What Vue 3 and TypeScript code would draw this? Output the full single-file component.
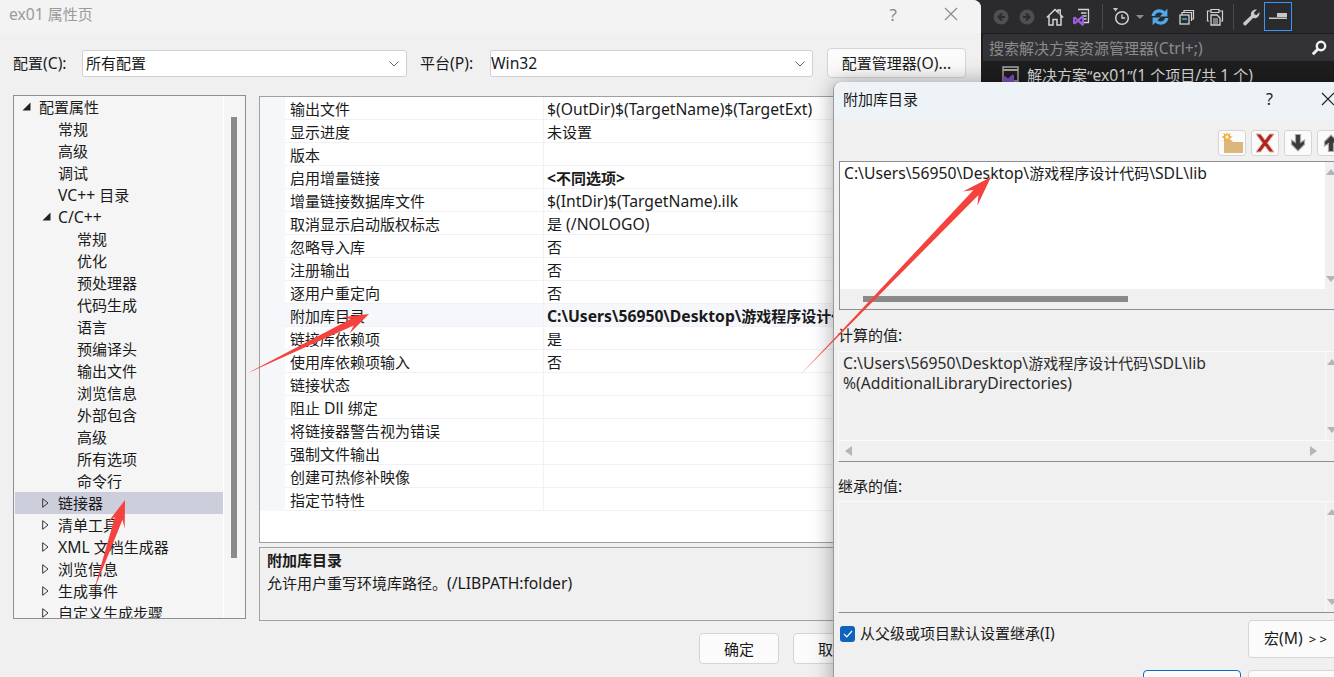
<template>
  <div class="desktop">
    <!-- dark VS panel behind the dialogs -->
    <div class="vs-panel">
      <div class="vs-toolbar">
        <svg class="tb-icon" viewBox="0 0 16 16" width="16" height="16"><circle cx="8" cy="8" r="7.500" fill="#4f4f51" /><path d="M9 4.500 5.500 8 9 11.500M5.500 8H12" stroke="#2b2b2d" stroke-width="2" fill="none" /></svg>
        <svg class="tb-icon" viewBox="0 0 16 16" width="16" height="16"><circle cx="8" cy="8" r="7.500" fill="#4f4f51" /><path d="M7 4.500 10.500 8 7 11.500M10.500 8H4" stroke="#2b2b2d" stroke-width="2" fill="none" /></svg>
        <svg class="tb-icon home" viewBox="0 0 18 18" width="18" height="18"><path d="M.8 9.500 9 1.500l3 2.900V2h2.200v4.600L17.200 9.500M3 8v9h4v-5.500h4V17h4V8" stroke="#d4d4d4" stroke-width="1.500" fill="none" /></svg>
        <svg class="tb-icon vs" viewBox="0 0 18 18" width="18" height="18"><path d="M6 1.500h10.500v13H10" stroke="#d4d4d4" stroke-width="1.300" fill="none" /><path d="M9 5h5.500M10 8h4.500M11 11h3.500" stroke="#d4d4d4" stroke-width="1.300" /><path d="M1 9.500l2-1 3 2.400L10.500 7l1.500 1v9l-1.500 1L6 14l-3 2.400-2-1zM3 11v2.500l1.700-1.200zM10 10.500 7.500 12.300 10 14.100z" fill="#9b5fe0" fill-rule="evenodd" /></svg>
        <span class="tb-sep"></span>
        <svg class="tb-icon clock" viewBox="0 0 18 18" width="18" height="18"><path d="M0 0h5L2.500 3.500z" fill="#c8c8c8" /><circle cx="9" cy="10" r="6.300" stroke="#d4d4d4" stroke-width="1.500" fill="none" /><path d="M9 6.500V10h3.200" stroke="#d4d4d4" stroke-width="1.300" fill="none" /></svg>
        <span class="tb-drop"></span>
        <svg class="tb-icon sync" viewBox="0 0 18 18" width="18" height="18"><path d="M.6 8C1.100 3.800 4.400 1.300 8.200 1.300c2.300 0 4 .8 5.400 2.100L16.400.8v7.600H8.800l2.700-2.600c-.8-.8-2-1.400-3.300-1.400C6.100 4.400 4.300 5.800 4 8zM17.400 10c-.5 4.200-3.800 6.700-7.600 6.700-2.300 0-4-.8-5.400-2.100l-2.800 2.600V9.600h7.600l-2.700 2.600c.8.800 2 1.400 3.300 1.400 2.100 0 3.900-1.400 4.200-3.600z" fill="#4fa9ea" /></svg>
        <svg class="tb-icon copy" viewBox="0 0 16 16" width="16" height="16"><path d="M5 4V1.500h9.500V10H12" stroke="#d4d4d4" stroke-width="1.200" fill="none" /><path d="M3 6V3.500h9.500V12" stroke="#d4d4d4" stroke-width="1.200" fill="none" /><rect x="1" y="6" width="9" height="9" stroke="#d4d4d4" stroke-width="1.300" fill="#2b2b2d" /><path d="M3 10h5" stroke="#4fa9ea" stroke-width="1.500" /></svg>
        <svg class="tb-icon clip" viewBox="0 0 18 18" width="18" height="18"><path d="M3 13H1.500V3h3M13.500 3h3v10H15" stroke="#d4d4d4" stroke-width="1.200" fill="none" /><path d="M5 1.500h8v3H5z" stroke="#d4d4d4" stroke-width="1.200" fill="none" /><path d="M5 7h6l3 3v7H5z" stroke="#d4d4d4" stroke-width="1.300" fill="#2b2b2d" /><path d="M7 11h5M7 13h5M7 15h5" stroke="#d4d4d4" /></svg>
        <span class="tb-sep second"></span>
        <svg class="tb-icon wrench" viewBox="0 0 18 18" width="18" height="18"><path d="M1.500 14.500 9 7.500C8.300 4.500 10.500 1 15 1.500l-3 3 .5 2 2 .6 3-3c.3 4.500-3.200 6.800-6.400 6L4 17.200c-1.800 1-3.600-1-2.500-2.700z" fill="#c8c8c8" /></svg>
        <div class="pin-box">
          <svg viewBox="0 0 18 7" width="18" height="7"><path d="M8 0h10v4H8z" fill="#c8c8c8" /><path d="M0 4.500h18V6H0z" fill="#c8c8c8" /></svg>
        </div>
      </div>
      <div class="vs-search">
        <span><Txt t="搜索解决方案资源管理器(Ctrl+;)" /></span>
        <svg viewBox="0 0 16 16" width="16" height="16"><circle cx="10" cy="6" r="4.200" stroke="#f0f0f0" stroke-width="2.400" fill="none" /><path d="M7 9 1.800 14.200" stroke="#f0f0f0" stroke-width="3" /></svg>
      </div>
      <div class="vs-tree">
        <svg viewBox="0 0 17 18" width="17" height="18"><path d="M1 1h15v14H1z" stroke="#a8a8a8" stroke-width="1.400" fill="#1e1e1e" /><path d="M1 4h15" stroke="#a8a8a8" stroke-width="2" /><path d="M1 11l2-1 3 2.400 4.500-4 1.500 1v9H1z" fill="#7d4fc0" /></svg>
        <span><Txt t="解决方案“ex01”(1 个项目/共 1 个)" /></span>
      </div>
    </div>

    <!-- property pages dialog -->
    <div class="dialog main">
      <div class="titlebar">
        <span class="title"><Txt t="ex01 属性页" /></span>
        <span class="help">?</span>
        <svg class="close" viewBox="0 0 14 14" width="14" height="14"><path d="M1 1l12 12M13 1 1 13" stroke="#8a8a8a" stroke-width="1.100" /></svg>
      </div>
      <div class="config-row">
        <label class="cfg-label"><Txt t="配置(C):" /></label>
        <div class="combo first">
          <span>所有配置</span>
          <svg viewBox="0 0 10 6" width="10" height="6"><path d="M.5.5 5 5 9.500.5" stroke="#666" fill="none" /></svg>
        </div>
        <label class="cfg-label plat"><Txt t="平台(P):" /></label>
        <div class="combo second">
          <span><Txt t="Win32" /></span>
          <svg viewBox="0 0 10 6" width="10" height="6"><path d="M.5.5 5 5 9.500.5" stroke="#666" fill="none" /></svg>
        </div>
        <button class="btn mgr"><Txt t="配置管理器(O)..." /></button>
      </div>
      <div class="content">
        <div class="tree">
          <div class="tree-rows">
            <div
              v-for="node in treeNodes"
              :key="node.id"
              :class="['tree-row', 'lv' + node.level, { selected: node.selected }]"
            >
              <svg v-if="node.arrow === 'open'" class="twisty" viewBox="0 0 9 9" width="9" height="9"><path d="M8.500.5v8h-8z" fill="#222" /></svg>
              <svg v-else-if="node.arrow === 'closed'" class="twisty" viewBox="0 0 7 10" width="7" height="10"><path d="M.700.700 6 5 .700 9.300z" fill="none" stroke="#333" /></svg>
              <span class="node-text"><Txt :t="node.text" /></span>
            </div>
          </div>
          <div class="tree-scroll"><div class="tree-thumb"></div></div>
        </div>
        <div class="right-col">
          <div class="grid">
            <div v-for="row in gridRows" :key="row.name" :class="['grid-row', { current: row.current }]">
              <div class="margin"></div>
              <div class="cell-name"><Txt :t="row.name" /></div>
              <div :class="['cell-value', { bold: row.bold }]"><Txt :t="row.value" /></div>
            </div>
          </div>
          <div class="desc">
            <div class="desc-title">附加库目录</div>
            <div><Txt t="允许用户重写环境库路径。(/LIBPATH:folder)" /></div>
          </div>
        </div>
      </div>
      <div class="footer">
        <button class="btn foot">确定</button>
        <button class="btn foot">取消</button>
      </div>
    </div>

    <!-- additional library directories dialog -->
    <div class="dialog child">
      <div class="titlebar child-title">
        <span class="child-name">附加库目录</span>
        <span class="child-help">?</span>
        <svg class="child-close" viewBox="0 0 14 14" width="14" height="14"><path d="M1 1l12 12M13 1 1 13" stroke="#222" stroke-width="1.200" /></svg>
      </div>
      <div class="child-tools">
        <button class="tool">
          <svg viewBox="0 0 24 22" width="24" height="22"><path d="M4 8h7l2 2h10v11H4z" fill="#dcb67a" /><path d="M7 0l1 2.400L10.500 1l-.7 2.700L12.500 5l-2.700 1.300.7 2.700L8 7.600 7 10 6 7.600 3.500 9l.7-2.700L1.500 5l2.700-1.300L3.500 1 6 2.400z" fill="#f0a93c" /><circle cx="7" cy="5" r="1.700" fill="#fff3cf" /></svg>
        </button>
        <button class="tool">
          <svg viewBox="0 0 22 22" width="22" height="22"><path d="M2 2h4.500L11 8 15.500 2H20l-6.500 9 6.500 9h-4.500L11 14l-4.500 6H2l6.500-9z" fill="#b3261a" stroke="#d9b5ae" stroke-width="1" /></svg>
        </button>
        <button class="tool">
          <svg viewBox="0 0 18 20" width="18" height="20"><path d="M6.500 1.500h5v8L15.500 7v4.500L9 18 2.500 11.500V7l4 2.500z" fill="#3a3a3a" stroke="#aaa" stroke-width="1.200" /></svg>
        </button>
        <button class="tool">
          <svg viewBox="0 0 18 20" width="18" height="20"><path d="M6.500 18.500h5v-8l4 2.500V8.500L9 2 2.500 8.500V13l4-2.500z" fill="#3a3a3a" stroke="#aaa" stroke-width="1.200" /></svg>
        </button>
      </div>
      <div class="edit-box">
        <div class="edit-main">
          <div class="edit-text"><Txt :t="libPath" /></div>
          <div class="vscroll">
            <i class="tri up"></i>
            <i class="tri down"></i>
          </div>
        </div>
        <div class="hscroll-dark"><div class="h-thumb"></div></div>
      </div>
      <div class="field-label computed">计算的值<Txt t=":" /></div>
      <div class="readonly computed-box">
        <div class="ro-main">
          <div class="ro-text">
            <div><Txt :t="libPath" /></div>
            <div><Txt t="%(AdditionalLibraryDirectories)" /></div>
          </div>
          <div class="vscroll">
            <i class="tri up"></i>
            <i class="tri down"></i>
          </div>
        </div>
        <div class="hscroll-light">
          <i class="tri left"></i>
          <i class="tri right"></i>
        </div>
      </div>
      <div class="field-label inherited">继承的值<Txt t=":" /></div>
      <div class="readonly inherited-box">
        <div class="ro-main">
          <div class="ro-text"></div>
          <div class="vscroll">
            <i class="tri up"></i>
            <i class="tri down"></i>
          </div>
        </div>
      </div>
      <div class="child-bottom">
        <div class="check-wrap">
          <span class="check">
            <svg viewBox="0 0 10 8" width="10" height="8"><path d="M1 4l2.800 2.800L9 1" stroke="#fff" stroke-width="1.200" fill="none" /></svg>
          </span>
          <span class="check-text"><Txt t="从父级或项目默认设置继承(I)" /></span>
        </div>
        <button class="btn macro"><Txt t="宏(M)" /><span class="gt">&gt; &gt;</span></button>
      </div>
      <div class="child-actions">
        <button class="btn action primary"></button>
        <button class="btn action"></button>
      </div>
    </div>

    <!-- red annotation arrows drawn on top of the screenshot -->
    <svg class="arrows" viewBox="0 0 1334 677" width="1334" height="677">
      <polygon v-for="a in arrows" :key="a.id" :points="a.points" fill="#f4433f" />
    </svg>
  </div>
</template>

<script setup lang="ts">
import { h } from 'vue'

interface TreeNode {
  id: number
  text: string
  level: number
  arrow?: 'open' | 'closed'
  selected?: boolean
}

interface GridRow {
  name: string
  value: string
  bold?: boolean
  current?: boolean
}

// latin runs are set a little larger than the CJK ones, the installed latin face is narrower than the original
const Txt = (props: { t: string }) =>
  (props.t.match(/[\x00-\x7f]+|[^\x00-\x7f]+/g) || []).map((run) =>
    /^[\x00-\x7f]/.test(run) ? h('span', { class: 'lat' }, run) : run,
  )
Txt.props = ['t']

const libPath = 'C:\\Users\\56950\\Desktop\\游戏程序设计代码\\SDL\\lib'

const treeSource: [string, number, ('open' | 'closed')?][] = [
  ['配置属性', 0, 'open'],
  ['常规', 1],
  ['高级', 1],
  ['调试', 1],
  ['VC++ 目录', 1],
  ['C/C++', 1, 'open'],
  ['常规', 2],
  ['优化', 2],
  ['预处理器', 2],
  ['代码生成', 2],
  ['语言', 2],
  ['预编译头', 2],
  ['输出文件', 2],
  ['浏览信息', 2],
  ['外部包含', 2],
  ['高级', 2],
  ['所有选项', 2],
  ['命令行', 2],
  ['链接器', 1, 'closed'],
  ['清单工具', 1, 'closed'],
  ['XML 文档生成器', 1, 'closed'],
  ['浏览信息', 1, 'closed'],
  ['生成事件', 1, 'closed'],
  ['自定义生成步骤', 1, 'closed'],
]

const treeNodes: TreeNode[] = treeSource.map(([text, level, arrow], id) => ({
  id,
  text,
  level,
  arrow,
  selected: text === '链接器',
}))

const gridRows: GridRow[] = [
  { name: '输出文件', value: '$(OutDir)$(TargetName)$(TargetExt)' },
  { name: '显示进度', value: '未设置' },
  { name: '版本', value: '' },
  { name: '启用增量链接', value: '<不同选项>', bold: true },
  { name: '增量链接数据库文件', value: '$(IntDir)$(TargetName).ilk' },
  { name: '取消显示启动版权标志', value: '是 (/NOLOGO)' },
  { name: '忽略导入库', value: '否' },
  { name: '注册输出', value: '否' },
  { name: '逐用户重定向', value: '否' },
  { name: '附加库目录', value: libPath, bold: true, current: true },
  { name: '链接库依赖项', value: '是' },
  { name: '使用库依赖项输入', value: '否' },
  { name: '链接状态', value: '' },
  { name: '阻止 Dll 绑定', value: '' },
  { name: '将链接器警告视为错误', value: '' },
  { name: '强制文件输出', value: '' },
  { name: '创建可热修补映像', value: '' },
  { name: '指定节特性', value: '' },
]

// builds the tapered annotation arrow as a polygon
const arrowPoints = (x1: number, y1: number, x2: number, y2: number, head: number, wing: number, neck: number) => {
  const len = Math.hypot(x2 - x1, y2 - y1)
  const dx = (x2 - x1) / len
  const dy = (y2 - y1) / len
  const nx = -dy
  const ny = dx
  const at = (back: number, side: number) =>
    `${(x2 - dx * back + nx * side).toFixed(1)},${(y2 - dy * back + ny * side).toFixed(1)}`
  return [`${x1},${y1}`, at(head * 0.72, neck), at(head, wing), `${x2},${y2}`, at(head, -wing), at(head * 0.72, -neck)].join(' ')
}

const arrows = [
  { id: 1, points: arrowPoints(248, 373, 369, 314, 26, 9, 3.5) },
  { id: 2, points: arrowPoints(800, 375, 991, 177, 30, 10, 3.5) },
  { id: 3, points: arrowPoints(94, 590, 125, 500, 27, 9, 4) },
]
</script>

<style>
.lat {
  font-size: 15.7px;
}
</style>

<style scoped>
.desktop {
  position: relative;
  width: 1334px;
  height: 677px;
  overflow: hidden;
  background: #1e1e1e;
  font-family: "Noto Sans", "Noto Sans CJK SC", sans-serif;
  font-size: 15px;
  color: #1a1a1a;
}

button {
  font: inherit;
  color: inherit;
}

.vs-panel {
  position: absolute;
  left: 977px;
  top: 0;
  width: 357px;
  height: 100%;
  background: #1e1e1e;
  color: #dcdcdc;
}

.vs-toolbar {
  height: 33px;
  background: #2b2b2d;
  display: flex;
  align-items: center;
  padding-left: 16px;
}

.tb-icon {
  flex: none;
  margin-right: 10px;
}

.home {
  margin-left: 1px;
  margin-right: 8px;
}

.vs {
  margin-right: 12px;
}

.tb-sep {
  width: 1px;
  height: 26px;
  background: #4a4a4c;
  margin: 0 10px 0 0;
}

.tb-sep.second {
  margin: 0 8px 0 -1px;
}

.clock {
  margin-right: 5px;
}

.tb-drop {
  width: 0;
  height: 0;
  border-left: 4px solid transparent;
  border-right: 4px solid transparent;
  border-top: 4px solid #8c8c8c;
  margin-right: 7px;
}

.copy {
  margin-right: 11px;
}

.clip {
  margin-right: 10px;
}

.wrench {
  margin-right: 4px;
}

.pin-box {
  width: 28px;
  height: 29px;
  box-sizing: border-box;
  border: 1px solid #3399ff;
  display: flex;
  align-items: center;
  justify-content: center;
}

.vs-search {
  height: 27px;
  margin: 1px 0 0 6px;
  padding: 0 7px 0 6px;
  background: #333337;
  display: flex;
  align-items: center;
  justify-content: space-between;
  color: #8b8b8b;
}

.vs-tree {
  display: flex;
  align-items: center;
  gap: 8px;
  padding: 3px 0 0 25px;
  height: 22px;
}

.dialog {
  position: absolute;
  background: #f0f0f0;
}

.main {
  left: 0;
  top: 0;
  width: 981px;
  height: 677px;
  border-top-right-radius: 8px;
  display: flex;
  flex-direction: column;
}

.titlebar {
  flex: none;
  height: 33px;
  box-sizing: border-box;
  padding-bottom: 5px;
  background: #f3f3f3;
  display: flex;
  align-items: center;
  border-top-right-radius: 8px;
}

.title {
  margin-left: 9px;
  color: #9a9a9a;
}

.help {
  margin-left: auto;
  color: #8a8a8a;
  font-size: 17px;
}

.close {
  margin: 0 23px 0 47px;
}

.config-row {
  flex: none;
  height: 30px;
  margin-top: 15px;
  display: flex;
  align-items: center;
  padding-left: 13px;
}

.cfg-label {
  width: 69px;
}

.cfg-label.plat {
  width: 70px;
}

.combo {
  height: 27px;
  box-sizing: border-box;
  border: 1px solid #d0d0d0;
  border-radius: 3px;
  background: #fff;
  padding: 1px 7px 0 3px;
  line-height: 21px;
  display: flex;
  align-items: center;
  justify-content: space-between;
}

.combo.first {
  width: 325px;
  margin-right: 13px;
}

.combo.second {
  width: 323px;
  margin-right: 14px;
  padding-left: 0;
}

.btn {
  box-sizing: border-box;
  background: #fbfbfb;
  border: 1px solid #d5d5d5;
  border-radius: 4px;
  padding: 0;
}

.mgr {
  width: 139px;
  height: 30px;
  white-space: nowrap;
}

.content {
  flex: none;
  display: flex;
  margin-top: 17px;
  padding-left: 13px;
}

.tree {
  width: 233px;
  height: 524px;
  box-sizing: border-box;
  border: 1px solid #8e8f94;
  background: #f5f5f5;
  display: flex;
  overflow: hidden;
  margin-right: 13px;
}

.tree-rows {
  flex: none;
  width: 208px;
  margin-left: 1px;
  border-right: 1px solid #fff;
}

.tree-row {
  height: 22px;
  box-sizing: border-box;
  line-height: 22px;
  display: flex;
  align-items: flex-start;
  position: relative;
  white-space: nowrap;
}

.tree-row.selected {
  background: #cccedb;
}

.lv0 {
  padding-left: 24px;
}

.lv1 {
  padding-left: 43px;
}

.lv2 {
  padding-left: 62px;
}

.twisty {
  position: absolute;
  top: 6px;
  left: 7px;
}

.lv1 .twisty {
  left: 27px;
}

.tree-scroll {
  flex: 1;
  padding: 21px 0 0 7px;
}

.tree-thumb {
  width: 6px;
  height: 441px;
  background: #8a8a8a;
}

.right-col {
  flex: none;
  width: 707px;
  margin-top: 1px;
}

.grid {
  height: 447px;
  box-sizing: border-box;
  border: 1px solid #a0a0a0;
  border-right: none;
  background: #fff;
  overflow: hidden;
}

.grid-row {
  height: 23px;
  box-sizing: border-box;
  display: flex;
  align-items: center;
  border-bottom: 1px solid #f0f0f6;
  white-space: nowrap;
}

.grid-row.current {
  background: #f5f7fb;
}

.margin {
  flex: none;
  width: 25px;
  height: 23px;
  background: #f5f7fb;
}

.cell-name {
  flex: none;
  width: 258px;
  padding-left: 5px;
  box-sizing: border-box;
  height: 23px;
  line-height: 25px;
}

.cell-value {
  flex: none;
  padding-left: 3px;
  height: 23px;
  line-height: 25px;
  border-left: 1px solid #f0f0f6;
}

.bold {
  font-weight: 700;
}

.desc {
  height: 74px;
  margin-top: 4px;
  box-sizing: border-box;
  border: 1px solid #a0a0a0;
  border-right: none;
  padding: 1px 7px;
  line-height: 23px;
  background: #f0f0f0;
}

.desc-title {
  font-weight: 700;
}

.footer {
  flex: none;
  display: flex;
  gap: 14px;
  margin-top: 12px;
  padding-left: 699px;
}

.foot {
  width: 80px;
  height: 31px;
}

.child {
  left: 833px;
  top: 82px;
  width: 520px;
  height: 620px;
  border-top-left-radius: 8px;
  box-shadow: 0 0 22px rgba(0, 0, 0, 0.35);
  border-left: 1px solid #9a9a9a;
  box-sizing: border-box;
}

.child-title {
  height: 37px;
  background: #eef3f8;
  border-radius: 8px 0 0 0;
  padding-bottom: 5px;
}

.child-name {
  margin-left: 9px;
}

.child-help {
  font-size: 16px;
  position: absolute;
  left: 432px;
  top: 6px;
}

.child-close {
  position: absolute;
  left: 487px;
  top: 10px;
}

.child-tools {
  height: 26px;
  margin-top: 11px;
  padding-left: 384px;
  display: flex;
  gap: 5px;
}

.tool {
  flex: none;
  width: 28px;
  height: 26px;
  box-sizing: border-box;
  background: #fbfbfb;
  border: 1px solid #d5d5d5;
  border-radius: 3px;
  padding: 0;
  display: flex;
  align-items: center;
  justify-content: center;
}

.edit-box {
  margin: 5px 0 0 5px;
  height: 149px;
  box-sizing: border-box;
  border: 1px solid #8e8f94;
  border-right: none;
  display: flex;
  flex-direction: column;
}

.edit-main {
  flex: 1;
  display: flex;
  background: #fff;
}

.edit-text {
  width: 485px;
  flex: none;
  padding: 1px 0 0 4px;
  box-sizing: border-box;
  line-height: 21px;
}

.vscroll {
  position: relative;
  flex: none;
  width: 29px;
  background: #f0f0f0;
}

.hscroll-dark {
  flex: none;
  height: 20px;
  background: #f0f0f0;
  padding: 7px 0 0 23px;
  box-sizing: border-box;
}

.h-thumb {
  width: 265px;
  height: 6px;
  background: #8a8a8a;
}

.tri {
  position: absolute;
  width: 0;
  height: 0;
}

.tri.up {
  left: 1px;
  top: 7px;
  border-left: 5px solid transparent;
  border-right: 5px solid transparent;
  border-bottom: 6px solid #b5b5b5;
}

.tri.down {
  left: 1px;
  bottom: 7px;
  border-left: 5px solid transparent;
  border-right: 5px solid transparent;
  border-top: 6px solid #b5b5b5;
}

.tri.left {
  left: 6px;
  top: 5px;
  border-top: 5px solid transparent;
  border-bottom: 5px solid transparent;
  border-right: 7px solid #b5b5b5;
}

.tri.right {
  left: 471px;
  top: 5px;
  border-top: 5px solid transparent;
  border-bottom: 5px solid transparent;
  border-left: 7px solid #b5b5b5;
}

.field-label {
  margin-left: 4px;
  line-height: 20px;
}

.computed {
  margin-top: 15px;
}

.inherited {
  margin-top: 14px;
}

.readonly {
  margin-left: 4px;
  box-sizing: border-box;
  border-left: 1px solid #fafafa;
  border-top: 1px solid #fafafa;
  border-bottom: 1px solid #8e8e8e;
  display: flex;
  flex-direction: column;
}

.computed-box {
  height: 111px;
  margin-top: 6px;
}

.inherited-box {
  height: 112px;
  margin-top: 5px;
}

.ro-main {
  flex: 1;
  display: flex;
}

.ro-text {
  width: 486px;
  flex: none;
  box-sizing: border-box;
  padding: 1px 0 0 4px;
  line-height: 20px;
  color: #2b2b2b;
}

.readonly .vscroll {
  border-left: 1px solid #fafafa;
}

.hscroll-light {
  position: relative;
  flex: none;
  height: 20px;
  border-top: 1px solid #fafafa;
}

.child-bottom {
  display: flex;
  align-items: flex-start;
  margin-top: 7px;
  padding-left: 6px;
}

.check-wrap {
  display: flex;
  align-items: flex-start;
  gap: 5px;
  margin-top: 5px;
  width: 408px;
  line-height: 20px;
}

.check {
  flex: none;
  width: 15px;
  height: 16px;
  margin-top: 1px;
  border-radius: 3px;
  background: #0f62bd;
  display: flex;
  align-items: center;
  justify-content: center;
}

.check-text {
  margin-top: -2px;
}

.macro {
  flex: none;
  width: 90px;
  height: 38px;
  text-align: left;
  padding: 0 0 3px 15px;
  white-space: nowrap;
}

.gt {
  margin-left: 6px;
  font-size: 13px;
  color: #000;
}

.child-actions {
  display: flex;
  gap: 7px;
  margin-top: 12px;
  padding-left: 309px;
}

.action {
  flex: none;
  width: 98px;
  height: 40px;
}

.action.primary {
  border: 1.500px solid #0a6cc4;
}

.arrows {
  position: absolute;
  left: 0;
  top: 0;
  pointer-events: none;
}
</style>
